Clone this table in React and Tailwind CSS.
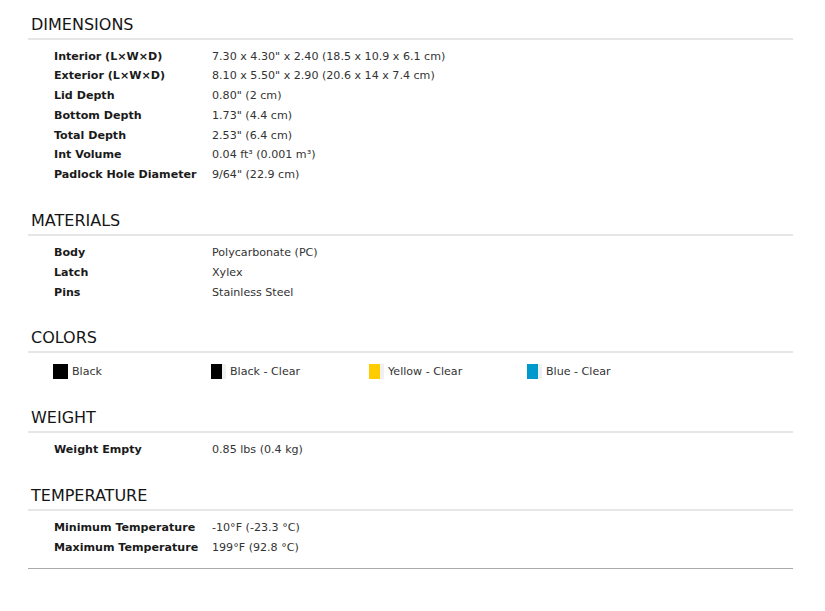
import React from 'react';

const sections = [
  {
    title: 'Dimensions',
    rows: [
      ['Interior (L×W×D)', '7.30 x 4.30" x 2.40 (18.5 x 10.9 x 6.1 cm)'],
      ['Exterior (L×W×D)', '8.10 x 5.50" x 2.90 (20.6 x 14 x 7.4 cm)'],
      ['Lid Depth', '0.80" (2 cm)'],
      ['Bottom Depth', '1.73" (4.4 cm)'],
      ['Total Depth', '2.53" (6.4 cm)'],
      ['Int Volume', '0.04 ft³ (0.001 m³)'],
      ['Padlock Hole Diameter', '9/64" (22.9 cm)'],
    ],
  },
  {
    title: 'Materials',
    rows: [
      ['Body', 'Polycarbonate (PC)'],
      ['Latch', 'Xylex'],
      ['Pins', 'Stainless Steel'],
    ],
  },
  { title: 'Colors', colors: true },
  {
    title: 'Weight',
    rows: [['Weight Empty', '0.85 lbs (0.4 kg)']],
  },
  {
    title: 'Temperature',
    rows: [
      ['Minimum Temperature', '-10°F (-23.3 °C)'],
      ['Maximum Temperature', '199°F (92.8 °C)'],
    ],
  },
];

// swatch: solid colour, "clear" ones get a pale strip on the right
const colors = [
  { name: 'Black', swatch: 'bg-black', clear: false },
  { name: 'Black - Clear', swatch: 'bg-black', clear: true },
  { name: 'Yellow - Clear', swatch: 'bg-[#ffcc00]', clear: true },
  { name: 'Blue - Clear', swatch: 'bg-[#0099cc]', clear: true },
];

const Swatch = ({ swatch, clear }) => (
  <span className="flex w-[15px] h-[15px] mr-[4px] bg-[#f0f0f0]">
    <span className={`${swatch} h-full ${clear ? 'w-[11px]' : 'w-full'}`}></span>
  </span>
);

const Section = ({ section, first }) => (
  <div className={first ? '' : 'mt-[26px]'}>
    <h3 className="pl-[3px] pb-[3px] text-[16px] leading-[20px] uppercase text-[#151515] border-b-2 border-[#e6e6e6]">
      {section.title}
    </h3>
    <div className="mt-[7px] text-[11.1px] leading-[19.8px]">
      {section.colors ? (
        <div className="flex h-[22px] pl-[25px]">
          {colors.map((c) => (
            <div key={c.name} className="flex items-center w-[158px] text-[#333]">
              <Swatch swatch={c.swatch} clear={c.clear} />
              <span>{c.name}</span>
            </div>
          ))}
        </div>
      ) : (
        section.rows.map(([label, value]) => (
          <div key={label} className="flex pl-[26px]">
            <span className="w-[158px] shrink-0 font-bold text-[#1a1a1a]">{label}</span>
            <span className="text-[#333]">{value}</span>
          </div>
        ))
      )}
    </div>
  </div>
);

const App = () => {
  return (
    <div className="min-h-[611px] bg-white font-['DejaVu_Sans',sans-serif]">
      <div className="ml-[28px] w-[765px] pt-[14.5px]">
        {sections.map((s, i) => (
          <Section key={s.title} section={s} first={i === 0} />
        ))}
        <div className="mt-[10px] border-t border-[#aaaaaa]"></div>
      </div>
    </div>
  );
};

export default App;
